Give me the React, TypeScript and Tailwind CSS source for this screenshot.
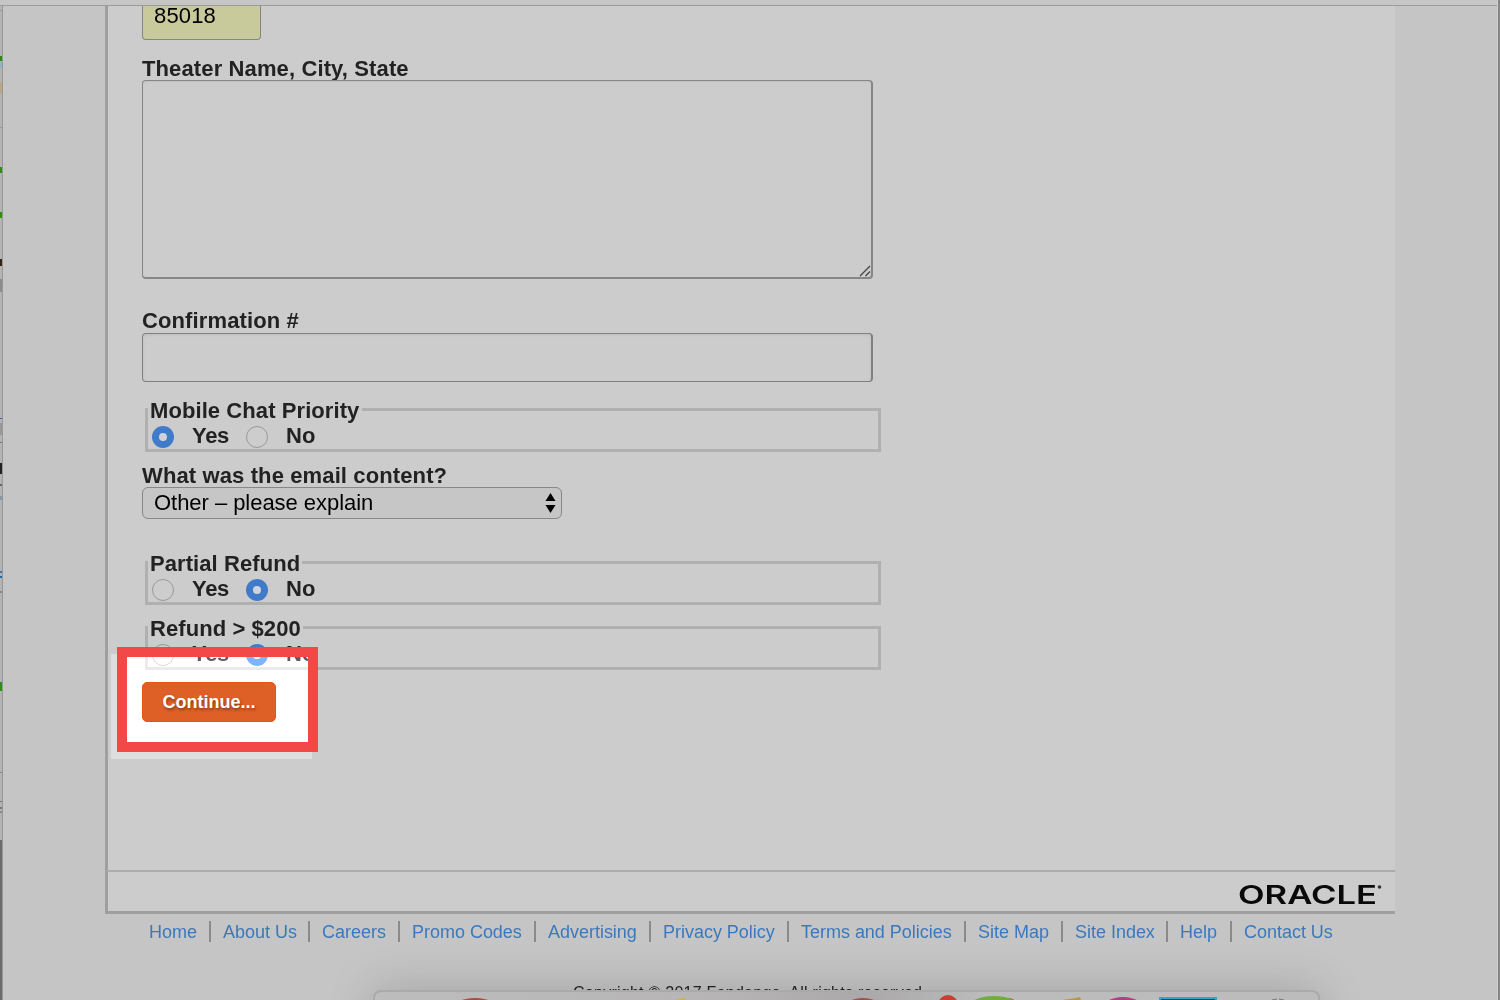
import type { ReactNode } from 'react';

function Radio({ checked = false }: { checked?: boolean }) {
  return checked ? (
    <span className="mt-[3px] flex size-[22px] shrink-0 items-center justify-center rounded-full bg-[#3f7bc8]">
      <span className="size-[8px] rounded-full bg-[#d0d4da]" />
    </span>
  ) : (
    <span className="mt-[3px] block size-[22px] shrink-0 rounded-full border border-[#999] bg-[#cdcdcd]" />
  );
}

function Label({ children }: { children: ReactNode }) {
  return (
    <div className="h-[23px] whitespace-nowrap text-[22px] leading-[24px] font-bold tracking-[0.12px] text-[#222]">
      {children}
    </div>
  );
}

function ChoiceGroup({ title, value, legendClass }: { title: string; value: 'Yes' | 'No'; legendClass: string }) {
  return (
    <div role="radiogroup" className="ml-[3px] h-[44px] w-[736px] border-[3px] border-[#b0b0b0] text-[22px] leading-[24px] font-bold tracking-[0.08px] text-[#222]">
      <div className={`-mt-[12px] h-[24px] whitespace-nowrap bg-[#ccc] pl-[2px] ${legendClass}`}>{title}</div>
      <div className="flex h-[24px] pl-[4px] leading-[26px]">
        <Radio checked={value === 'Yes'} />
        <span className="ml-[18px] w-[54px] tracking-[-0.3px]">Yes</span>
        <Radio checked={value === 'No'} />
        <span className="ml-[18px]">No</span>
      </div>
    </div>
  );
}

const links: [string, string][] = [
  ['Home', 'w-[62px]'],
  ['About Us', 'w-[99px]'],
  ['Careers', 'w-[90px]'],
  ['Promo Codes', 'w-[136px]'],
  ['Advertising', 'w-[115px]'],
  ['Privacy Policy', 'w-[138px]'],
  ['Terms and Policies', 'w-[177px]'],
  ['Site Map', 'w-[97px]'],
  ['Site Index', 'w-[105px]'],
  ['Help', 'w-[64px]'],
  ['Contact Us', 'w-[110px]'],
];

/* Slivers of the window that sits behind the browser, seen along the left edge. */
const slivers: [string, string][] = [
  ['mt-[4px] h-[1px]', 'bg-[#999]'],
  ['mt-[45px] h-[5px]', 'bg-[#2d8512]'],
  ['mt-[1px] h-[6px]', 'bg-[#91b4c4]'],
  ['mt-[14px] h-[12px]', 'bg-[#b9a78c]'],
  ['mt-[33px] h-[1px]', 'bg-[#999]'],
  ['mt-[39px] h-[6px]', 'bg-[#318d12]'],
  ['mt-[39px] h-[6px]', 'bg-[#318d12]'],
  ['mt-[41px] h-[7px]', 'bg-[#382416]'],
  ['mt-[13px] h-[13px]', 'bg-[#8c8c8c]'],
  ['mt-[126px] h-[1px]', 'bg-[#2a68a8]'],
  ['mt-[4px] h-[12px]', 'bg-[#989898]'],
  ['mt-[7px] h-[1px]', 'bg-[#777]'],
  ['mt-[20px] h-[11px]', 'bg-[#222]'],
  ['mt-[10px] h-[2px]', 'bg-[#666]'],
  ['mt-[10px] h-[4px]', 'bg-[#8797a5]'],
  ['mt-[71px] h-[2px]', 'bg-[#3978b5]'],
  ['mt-[3px] h-[2px]', 'bg-[#2a68a8]'],
  ['mt-[13px] h-[2px]', 'bg-[#888]'],
  ['mt-[89px] h-[9px]', 'bg-[#318d12]'],
  ['mt-[81px] h-[1px]', 'bg-[#888]'],
  ['mt-[28px] h-[1px]', 'bg-[#777]'],
  ['mt-[5px] h-[2px]', 'bg-[#777]'],
  ['mt-[2px] h-[2px]', 'bg-[#888]'],
  ['mt-[27px] h-[162px]', 'bg-[#6c6c6c]'],
];

export default function App() {
  return (
    <div
      className="relative isolate flex h-[1000px] w-[1500px] flex-col overflow-hidden bg-[#c5c5c5]"
      style={{ fontFamily: '"Liberation Sans", Arial, sans-serif' }}
    >
      <div className="h-[6px] shrink-0 border-b border-[#9c9c9c] bg-[#c6c6c6]" />
      <div className="flex h-[994px] shrink-0">
        <div className="flex w-[3px] shrink-0 flex-col overflow-hidden border-r border-[#989898] bg-[#b4b4b4]">
          {slivers.map(([size, color], i) => (
            <div key={i} className={`shrink-0 ${size} ${color}`} />
          ))}
        </div>

        <div className="ml-[102px] flex w-[1290px] shrink-0 flex-col">
          <main className="flex h-[864px] shrink-0 flex-col border-l-[3px] border-[#9f9f9f] bg-[#ccc] pl-[34px]">
            <div className="h-[34px] w-[119px] rounded-b-[4px] border-[1.5px] border-t-0 border-[#858585] bg-[#c8ca9b] pl-[11px] text-[22px] leading-[20px] tracking-[0.15px] text-black">
              85018
            </div>
            <div className="mt-[17px]"><Label>Theater Name, City, State</Label></div>
            <div className="flex h-[199px] w-[731px] items-end justify-end rounded-[4px] border border-r-2 border-b-2 border-[#868686] shadow-[inset_0_1px_2px_rgba(0,0,0,0.06)]">
              <svg width="12" height="12" viewBox="0 0 12 12" fill="none" stroke="#444" strokeWidth="1.3">
                <path d="M1 11 11 1M6.500 11 11 6.500" />
              </svg>
            </div>
            <div className="mt-[30px]"><Label>Confirmation #</Label></div>
            <div className="mt-px h-[49px] w-[731px] rounded-[4px] border border-r-2 border-[#808080] shadow-[inset_0_1px_3px_rgba(0,0,0,0.08)]" />
            <div className="mt-[26px]"><ChoiceGroup title="Mobile Chat Priority" value="Yes" legendClass="w-[214px]" /></div>
            <div className="mt-[12px]"><Label>What was the email content?</Label></div>
            <div className="flex h-[32px] w-[420px] items-center justify-between rounded-[6px] border-[1.5px] border-[#878787] bg-[#c6c6c6] pr-[5px] pl-[11px] text-[22px] leading-[28px] tracking-[-0.04px] text-black">
              <span>Other – please explain</span>
              <svg width="11" height="20" viewBox="0 0 11 20"><path d="M5.500 0 10.500 8H.5ZM5.500 20 .5 12h10Z" /></svg>
            </div>
            <div className="mt-[42px]"><ChoiceGroup title="Partial Refund" value="No" legendClass="w-[154px]" /></div>
            <div className="mt-[21px]"><ChoiceGroup title="Refund > $200" value="No" legendClass="w-[155px]" /></div>
            <button className="relative z-20 mt-[11.500px] h-[40px] w-[134px] rounded-[5px] border border-[#e7540f] bg-[#df6027] pt-px text-[18px] leading-none font-bold text-white [text-shadow:1px_2px_3px_rgba(0,0,0,0.4)]">
              Continue...
            </button>
          </main>

          <div className="flex h-[44px] shrink-0 justify-end border-t-2 border-b-[3px] border-l-[3px] border-t-[#acacac] border-b-[#9f9f9f] border-l-[#9f9f9f] bg-[#ccc] pt-[3px] pr-[10px]">
            <svg width="150" height="34" viewBox="0 0 150 34" fontFamily="Inter, sans-serif" fontWeight="600" fill="#090909">
              <text x="3" y="28.500" fontSize="26" textLength="139" lengthAdjust="spacingAndGlyphs">ORACLE</text>
              <circle cx="144.500" cy="12" r="1.800" fill="#333" />
            </svg>
          </div>

          <nav className="mt-[7px] flex h-[21px] shrink-0 pl-[44px] text-[18px] leading-[23px] whitespace-nowrap text-[#3b78bd]">
            {links.map(([name, width], i) => (
              <div key={name} className={`flex shrink-0 ${width} ${i ? 'pl-[12px]' : ''} ${i < links.length - 1 ? 'border-r-2 border-[#8a8a8a]' : ''}`}>
                <a className="tracking-[-0.02px]">{name}</a>
              </div>
            ))}
          </nav>
          <p className="mt-[41px] shrink-0 pl-[468px] text-[16px] leading-[20px] tracking-[0.26px] whitespace-nowrap text-[#222]">
            Copyright © 2017 Fandango. All rights reserved.
          </p>
        </div>
      </div>

      <div className="absolute top-0 right-0 h-full w-[3px] border-l border-[#d0d0d0] bg-[#858585]" />

      <div className="absolute top-[990px] left-[373px] h-[60px] w-[947px] rounded-[8px] border-2 border-[#aaa] bg-[#bababa] bg-[linear-gradient(90deg,#bdbdbd,#b7b5b6_35%,#aaa8a9_52%,#bcbcbc_65%)] shadow-[0_0_48px_rgba(0,0,0,0.18)]">
        <svg className="block" width="943" height="8" viewBox="375 992 943 8">
          <ellipse cx="475" cy="1010" rx="24" ry="12" fill="#a54e43" />
          <path d="M673 1000 684 998l2 2Z" fill="#cdb83c" />
          <ellipse cx="863" cy="1010" rx="20" ry="12" fill="#9e5050" />
          <circle cx="948" cy="1005" r="10" fill="#c64035" />
          <ellipse cx="1008" cy="1007" rx="10" ry="9" fill="#b54239" />
          <ellipse cx="994" cy="1014" rx="31" ry="18" fill="#71ac43" />
          <path d="M1062 1000 1076 998l4-1 1 3Z" fill="#bf943f" />
          <ellipse cx="1123" cy="1012" rx="23" ry="15" fill="#b13f82" />
          <path d="M1159 997h58v3h-58z" fill="#36a5bd" />
          <path d="M1161 999h54v1h-54z" fill="#174f5b" />
          <path d="m1272 1000 5-1m2 0 5 1" stroke="#777" />
        </svg>
      </div>

      <div className="absolute top-[654px] left-[111px] h-[105px] w-[201px] bg-[#dedede] [clip-path:polygon(0_0,6px_0,6px_98px,100%_98px,100%_100%,0_100%)]" />
      <div className="absolute top-[657px] left-[127px] z-10 h-[85px] w-[181px] bg-[#3b3b3b] mix-blend-plus-lighter" />
      <div className="absolute top-[647px] left-[117px] z-30 h-[105px] w-[201px] border-[10px] border-[#f24848]" />
    </div>
  );
}
